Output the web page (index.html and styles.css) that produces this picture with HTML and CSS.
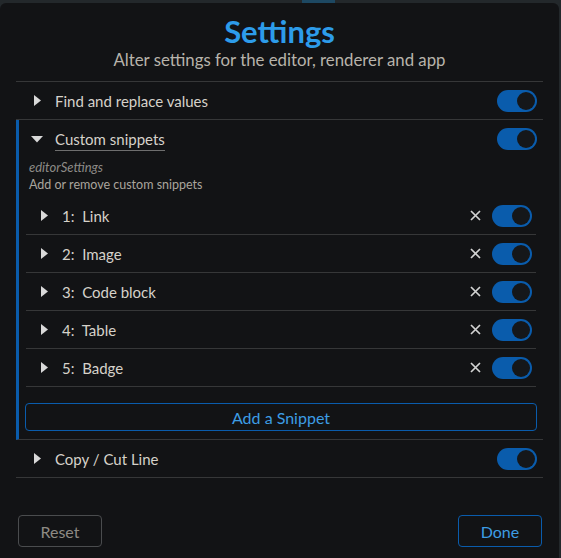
FILE: index.html
```html
<!DOCTYPE html>
<html>
<head>
<meta charset="utf-8">
<link rel="stylesheet" href="styles.css">
</head>
<body>
<div class="tab"></div>
<div class="modal">
  <header class="head">
    <h1 class="title">Settings</h1>
    <p class="subtitle">Alter settings for the editor, renderer and app</p>
  </header>
  <div class="list">
    <div class="row">
      <svg class="tri" width="8" height="12" viewBox="0 0 8 12"><polygon points="0,0 7,5.5 0,11" /></svg>
      <span class="label">Find and replace values</span>
      <span class="toggle"><span class="knob"></span></span>
    </div>
    <div class="section">
      <div class="row shead">
        <svg class="tri-down" width="12" height="7" viewBox="0 0 12 7"><polygon points="0,0 12,0 6,6.5" /></svg>
        <span class="label ul">Custom snippets</span>
        <span class="toggle"><span class="knob"></span></span>
      </div>
      <div class="meta">
        <div class="key">editorSettings</div>
        <div class="desc">Add or remove custom snippets</div>
      </div>
      <div class="snips">
        <div class="snip">
          <svg class="tri" width="8" height="12" viewBox="0 0 8 12"><polygon points="0,0 7,5.5 0,11" /></svg>
          <span class="label">1:&nbsp; Link</span>
          <svg class="x" width="11" height="11" viewBox="0 0 11 11"><path d="M1 1L10 10M10 1L1 10"/></svg>
          <span class="toggle"><span class="knob"></span></span>
        </div>
        <div class="snip">
          <svg class="tri" width="8" height="12" viewBox="0 0 8 12"><polygon points="0,0 7,5.5 0,11" /></svg>
          <span class="label">2:&nbsp; Image</span>
          <svg class="x" width="11" height="11" viewBox="0 0 11 11"><path d="M1 1L10 10M10 1L1 10"/></svg>
          <span class="toggle"><span class="knob"></span></span>
        </div>
        <div class="snip">
          <svg class="tri" width="8" height="12" viewBox="0 0 8 12"><polygon points="0,0 7,5.5 0,11" /></svg>
          <span class="label">3:&nbsp; Code block</span>
          <svg class="x" width="11" height="11" viewBox="0 0 11 11"><path d="M1 1L10 10M10 1L1 10"/></svg>
          <span class="toggle"><span class="knob"></span></span>
        </div>
        <div class="snip">
          <svg class="tri" width="8" height="12" viewBox="0 0 8 12"><polygon points="0,0 7,5.5 0,11" /></svg>
          <span class="label">4:&nbsp; Table</span>
          <svg class="x" width="11" height="11" viewBox="0 0 11 11"><path d="M1 1L10 10M10 1L1 10"/></svg>
          <span class="toggle"><span class="knob"></span></span>
        </div>
        <div class="snip">
          <svg class="tri" width="8" height="12" viewBox="0 0 8 12"><polygon points="0,0 7,5.5 0,11" /></svg>
          <span class="label">5:&nbsp; Badge</span>
          <svg class="x" width="11" height="11" viewBox="0 0 11 11"><path d="M1 1L10 10M10 1L1 10"/></svg>
          <span class="toggle"><span class="knob"></span></span>
        </div>
      </div>
      <div class="addwrap"><button class="add">Add a Snippet</button></div>
    </div>
    <div class="row">
      <svg class="tri" width="8" height="12" viewBox="0 0 8 12"><polygon points="0,0 7,5.5 0,11" /></svg>
      <span class="label">Copy / Cut Line</span>
      <span class="toggle"><span class="knob"></span></span>
    </div>
  </div>
  <footer class="foot">
    <button class="btn reset">Reset</button>
    <button class="btn done">Done</button>
  </footer>
</div>
</body>
</html>
```
FILE: styles.css
```css
* { box-sizing: border-box; }
html, body { margin: 0; padding: 0; }
body {
  width: 561px;
  height: 558px;
  background: #23282b;
  font-family: Lato, "Noto Sans", sans-serif;
  color: #d6d2ca;
  overflow: hidden;
  position: relative;
}
.tab {
  position: absolute;
  left: 302px;
  top: 0;
  width: 33px;
  height: 3px;
  background: #1d4862;
}
.modal {
  margin-top: 3px;
  width: 559px;
  height: 555px;
  background: #121315;
  border-radius: 6px 6px 0 0;
  display: flex;
  flex-direction: column;
}
.head {
  text-align: center;
  padding-top: 10px;
  height: 78px;
}
.title {
  margin: 0;
  font-size: 31px;
  font-weight: 700;
  color: #2d9cea;
  line-height: 36px;
}
.subtitle {
  margin: 1px 0 0;
  font-size: 16.8px;
  line-height: 20px;
  color: #b8b3ab;
}
.list {
  margin: 0 16px 0 16px;
  border-top: 1px solid #363738;
}
.row {
  display: flex;
  align-items: center;
  height: 38px;
  border-bottom: 1px solid #363738;
  padding-left: 18px;
  padding-right: 6px;
}
.tri { fill: #d9d9d9; flex: none; }
.tri-down { fill: #d9d9d9; flex: none; }
.label {
  font-size: 15px;
  flex: 1;
  margin-left: 13px;
}
.toggle {
  width: 40px;
  height: 22px;
  border-radius: 11px;
  background: #0a5cac;
  position: relative;
  flex: none;
}
.knob {
  position: absolute;
  right: 2px;
  top: 2px;
  width: 18px;
  height: 18px;
  border-radius: 50%;
  background: #15171a;
}
.section {
  border-left: 3px solid #0a5cac;
  border-bottom: 1px solid #363738;
}
.shead {
  border-bottom: none;
  padding-left: 12px;
  height: 38px;
}
.shead .label {
  flex: none;
  margin-left: 12px;
  padding-bottom: 1px;
  border-bottom: 1px solid #6e6e6e;
  line-height: 19px;
  margin-top: 2px;
}
.shead .toggle { margin-left: auto; }
.meta { padding-left: 10px; padding-top: 0; }
.key {
  font-size: 13px;
  font-style: italic;
  color: #8d8b87;
  line-height: 18px;
}
.desc {
  font-size: 12.5px;
  color: #aaa59d;
  line-height: 18px;
}
.snips {
  margin: 3px 7px 0 7px;
}
.snip {
  display: flex;
  align-items: center;
  height: 38px;
  border-bottom: 1px solid #363738;
  padding-left: 15px;
  padding-right: 4px;
}
.snip .label { margin-left: 13px; }
.x { stroke: #d2d2d2; stroke-width: 1.7; fill: none; flex: none; margin-right: 11px; }
.addwrap { padding: 16px 6px 8px 6px; }
.add {
  display: block;
  width: 100%;
  height: 28px;
  background: transparent;
  border: 1px solid #0a5cac;
  border-radius: 4px;
  color: #3d9de4;
  font-family: inherit;
  font-size: 16px;
  padding: 0;
}
.foot {
  margin-top: auto;
  display: flex;
  justify-content: space-between;
  padding: 0 17px 11px 18px;
}
.btn {
  height: 32px;
  width: 84px;
  background: transparent;
  border-radius: 4px;
  font-family: inherit;
  font-size: 16px;
  padding: 0;
}
.reset { border: 1px solid #4a4c4e; color: #8e8a84; }
.done { border: 1px solid #0a5cac; color: #3d9de4; }
```
